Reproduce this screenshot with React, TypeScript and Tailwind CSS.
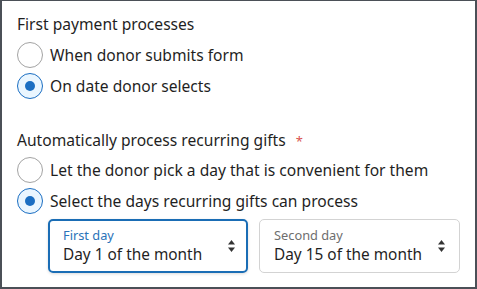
import { useState } from "react";

type Option = { value: string; label: string };

function Radio({
  checked,
  label,
  onSelect,
}: {
  checked: boolean;
  label: string;
  onSelect: () => void;
}) {
  return (
    <label className="flex h-[30px] cursor-pointer items-center gap-[7px]">
      <span
        onClick={onSelect}
        className={
          checked
            ? "flex h-[26px] w-[26px] shrink-0 items-center justify-center rounded-full border-[1.5px] border-[#1b6ec2] bg-[#eaf6ff]"
            : "flex h-[26px] w-[26px] shrink-0 items-center justify-center rounded-full border-[1.5px] border-[#a3a3a3] bg-white"
        }
      >
        {checked && <span className="h-[10px] w-[10px] rounded-full bg-[#1b6ec2]" />}
      </span>
      <span className="pt-[1px] text-[15.6px] text-[#1f1f1f]">{label}</span>
    </label>
  );
}

function SortArrows() {
  return (
    <svg width="7" height="12" viewBox="0 0 7 12" className="shrink-0">
      <path d="M3.5 0 L7 4.5 L0 4.5 Z" fill="#333" />
      <path d="M3.5 12 L7 7.5 L0 7.5 Z" fill="#333" />
    </svg>
  );
}

function DaySelect({
  label,
  value,
  focused,
}: {
  label: string;
  value: string;
  focused?: boolean;
}) {
  return (
    <div
      className={
        focused
          ? "flex h-[54px] w-[200px] items-center justify-between rounded-[5px] border-2 border-[#1a6db5] pl-[13px] pr-[11px] shadow-[0_1px_3px_rgba(0,0,0,0.15)]"
          : "flex h-[54px] w-[201px] items-center justify-between rounded-[5px] border border-[#d3d3d3] pl-[14px] pr-[14px]"
      }
    >
      <div className="flex flex-col">
        <span
          className={
            focused
              ? "text-[12.8px] leading-[18px] text-[#2a73b9]"
              : "text-[12.8px] leading-[18px] text-[#6e6e6e]"
          }
        >
          {label}
        </span>
        <span className="text-[15.4px] leading-[22px] text-[#1f1f1f]">{value}</span>
      </div>
      <SortArrows />
    </div>
  );
}

export default function App() {
  const [firstPayment, setFirstPayment] = useState("date");
  const [recurring, setRecurring] = useState("select");

  const firstOptions: Option[] = [
    { value: "submit", label: "When donor submits form" },
    { value: "date", label: "On date donor selects" },
  ];
  const recurringOptions: Option[] = [
    { value: "donor", label: "Let the donor pick a day that is convenient for them" },
    { value: "select", label: "Select the days recurring gifts can process" },
  ];

  return (
    <div
      className="h-[289px] w-[477px] border-x-2 border-t border-b-2 border-[#4b5057] bg-white pl-[15px] pt-[11px]"
      style={{ fontFamily: '"Noto Sans", "Open Sans", sans-serif' }}
    >
      <h2 className="h-[24px] text-[15.6px] leading-[24px] text-[#1f1f1f]">
        First payment processes
      </h2>
      <div className="mt-[4px] flex flex-col gap-[1px]">
        {firstOptions.map((o) => (
          <Radio
            key={o.value}
            label={o.label}
            checked={firstPayment === o.value}
            onSelect={() => setFirstPayment(o.value)}
          />
        ))}
      </div>

      <h2 className="mt-[27px] h-[24px] text-[15.6px] leading-[24px] text-[#1f1f1f]">
        Automatically process recurring gifts
        <span className="ml-[10px] text-[13px] text-[#d9534f]">*</span>
      </h2>
      <div className="mt-[3px] flex flex-col gap-[1px]">
        {recurringOptions.map((o) => (
          <Radio
            key={o.value}
            label={o.label}
            checked={recurring === o.value}
            onSelect={() => setRecurring(o.value)}
          />
        ))}
      </div>

      <div className="ml-[31px] mt-[3px] flex gap-[11px]">
        <DaySelect label="First day" value="Day 1 of the month" focused />
        <DaySelect label="Second day" value="Day 15 of the month" />
      </div>
    </div>
  );
}
